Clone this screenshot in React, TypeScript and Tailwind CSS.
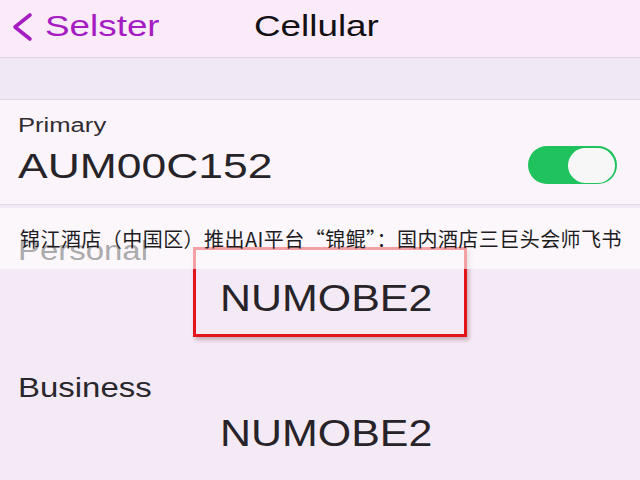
import { useState } from 'react'

const sans = "font-['Liberation_Sans',Arial,sans-serif]"
// the screenshot is a stretched phone capture: text is widened, not spaced
const wide = 'inline-block origin-left whitespace-nowrap'

function Toggle({ on, onChange }: { on: boolean; onChange: (v: boolean) => void }) {
  return (
    <button
      onClick={() => onChange(!on)}
      className={`relative w-[89px] h-[38px] rounded-full ${on ? 'bg-[#1fc25c]' : 'bg-[#e4dde6]'}`}
      aria-label="Primary line"
    >
      <span
        className={`absolute top-[1.5px] w-[47px] h-[35px] rounded-full bg-[#f8f7f8] ${on ? 'right-[2px]' : 'left-[2px]'}`}
      />
    </button>
  )
}

export default function App() {
  const [primaryOn, setPrimaryOn] = useState(true)

  return (
    <div className={`relative w-[640px] h-[480px] overflow-hidden bg-[#f4eaf5] ${sans}`}>
      {/* nav bar */}
      <header className="h-[58px] bg-[#fbeaf8] border-b border-[#ddd3df] flex items-start">
        <button className="w-[254px] flex items-start pl-[8px] pt-[12px] text-[#a51dc2]">
          <svg width="26" height="30" viewBox="0 0 26 30">
            <polyline
              points="22,3 7,15 22,27"
              fill="none"
              stroke="currentColor"
              strokeWidth="3.6"
              strokeLinecap="round"
              strokeLinejoin="round"
            />
          </svg>
          <span className={`${wide} ml-[11px] text-[29px] leading-[29px] scale-x-[1.27]`}>Selster</span>
        </button>
        <h1 className="pt-[12px] font-normal">
          <span className={`${wide} text-[29px] leading-[29px] scale-x-[1.27] text-[#121013]`}>Cellular</span>
        </h1>
      </header>

      {/* grouped gap */}
      <div className="h-[42px] bg-[#f0e9f4] border-b border-[#e2d9e5]" />

      {/* primary line cell */}
      <section className="h-[105px] bg-[#fcf4fb] border-b border-[#e2d9e5] pl-[18px] pr-[23px] pt-[15px] flex justify-between">
        <div>
          <div className="h-[20px]">
            <span className={`${wide} text-[20px] leading-[20px] scale-x-[1.28] text-[#302d32]`}>Primary</span>
          </div>
          <div className="mt-[13px] h-[35px]">
            <span className={`${wide} text-[35px] leading-[35px] scale-x-[1.27] text-[#262429]`}>AUM00C152</span>
          </div>
        </div>
        <div className="pt-[31px]">
          <Toggle on={primaryOn} onChange={setPrimaryOn} />
        </div>
      </section>

      {/* numbers */}
      <section className="pt-[33px]">
        <div className="pl-[18px] h-[27px]">
          <span className={`${wide} text-[27px] leading-[27px] scale-x-[1.22] text-[#2e2b30]`}>Personal</span>
        </div>
        <div className="relative ml-[193px] -mt-[18px] w-[274px] h-[90px] border-[3px] border-[#e3141c] shadow-[2px_3px_4px_rgba(120,60,80,0.35)] pt-[30px] pl-[24px]">
          <span className={`${wide} text-[37px] leading-[37px] scale-x-[1.16] text-[#272329]`}>NUMOBE2</span>
        </div>
        <div className="mt-[38px] pl-[18px] h-[27px]">
          <span className={`${wide} text-[27px] leading-[27px] scale-x-[1.22] text-[#2a272c]`}>Business</span>
        </div>
        <div className="mt-[13px] pl-[220px] h-[37px]">
          <span className={`${wide} text-[37px] leading-[37px] scale-x-[1.16] text-[#272329]`}>NUMOBE2</span>
        </div>
      </section>

      {/* caption banner laid over the screenshot */}
      <div className="absolute left-0 top-[208px] w-full h-[61px] bg-white/60 flex items-center pl-[20px]">
        <p className="text-[20px] leading-[20px] tracking-[0.45px] text-[#1e1c1f] font-['Noto_Sans_CJK_SC','Liberation_Sans',sans-serif] whitespace-nowrap">
          锦江酒店（中国区）推出AI平台“锦鲲”：国内酒店三巨头会师飞书
        </p>
      </div>
    </div>
  )
}
